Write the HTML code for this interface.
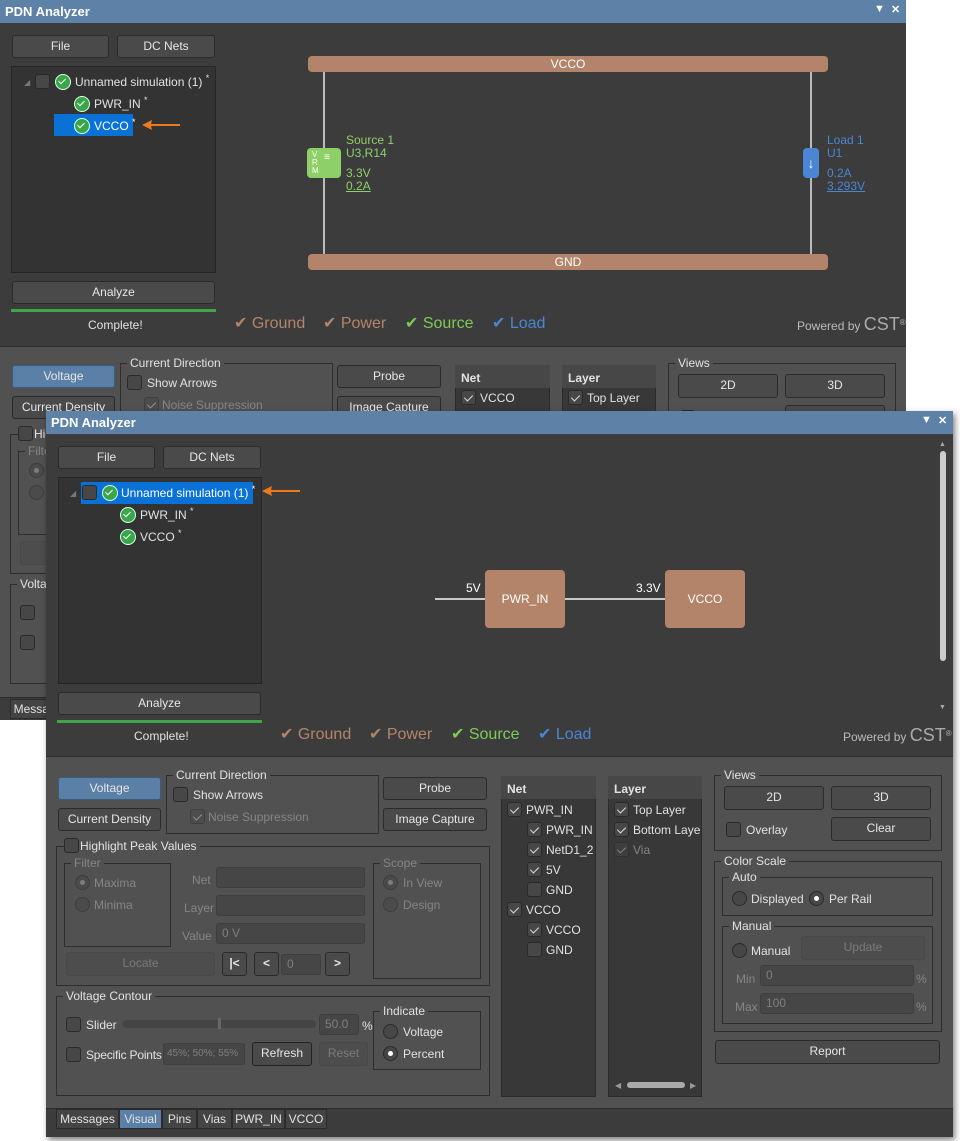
<!DOCTYPE html>
<html><head><meta charset="utf-8"><style>
*{box-sizing:border-box;margin:0;padding:0}
body{width:960px;height:1141px;background:#fff;position:relative;overflow:hidden;font-family:"Liberation Sans",sans-serif;font-size:12px;color:#e2e2e2}
sup{font-size:9px;vertical-align:5px;line-height:0}
.win{position:absolute;width:907px;height:726px;background:#3c3c3c;overflow:hidden}
.a{position:absolute}
.title{left:0;top:0;width:907px;height:23px;background:#5e82a7;color:#fff;font-weight:bold;font-size:13px;padding:4px 5px}
.tb{position:absolute;top:3px;font-size:11px;color:#fff}
.lower{left:0;top:346px;width:907px;height:352px;background:#515151;border-top:1px solid #2e2e2e;border-bottom:1px solid #2a2a2a}
.btn{position:absolute;background:#4a4a4a;border:1px solid #2b2b2b;border-radius:3px;text-align:center;color:#e6e6e6;line-height:21px;white-space:nowrap}
.btn.blue{background:#5b80a8;border-color:#3b5c80}
.btn.dis{color:#7a7a7a;background:#4d4d4d;border-color:#484848}
.grp{position:absolute;border:1px solid #2e2e2e}
.gl{position:absolute;top:-8px;left:6px;background:#515151;padding:0 3px;line-height:14px;white-space:nowrap}
.cb{position:absolute;width:15px;height:15px;border:1px solid #2a2a2a;background:#474747;border-radius:3px}
.cb.k::after{content:"";position:absolute;left:4px;top:2px;width:4px;height:7px;border:solid #ddd;border-width:0 1.5px 1.5px 0;transform:rotate(45deg)}
.cb.d{opacity:.45}
.t{position:absolute;white-space:nowrap;line-height:14px}
.g{color:#858585}
.rd{position:absolute;width:15px;height:15px;border:1px solid #2a2a2a;border-radius:50%;background:#474747}
.rd.on::after{content:"";position:absolute;left:4px;top:4px;width:5px;height:5px;border-radius:50%;background:#fff}
.rd.dis{opacity:.5}
.rd.dis.on::after{background:#aaa}
.inp{position:absolute;background:#464646;border:1px solid #3e3e3e;border-radius:3px;color:#7f7f7f;padding-left:5px;line-height:19px;white-space:nowrap;overflow:hidden}
.list{position:absolute;background:#383838;border:1px solid #2b2b2b}
.lh{position:absolute;background:#474747;font-weight:bold;padding:6px 6px;height:23px}
.tab{position:absolute;top:698px;height:20px;border:1px solid #2b2b2b;background:#444;line-height:18px;text-align:center;font-size:12px;white-space:nowrap}
.tab.on{background:#5b80a8}
.tree{position:absolute;background:#333;border:1px solid #262626}
.ok{position:absolute;width:16px;height:16px;border-radius:50%;background:#3aa64a;border:1.5px solid #dfe;}
.ok::after{content:"";position:absolute;left:4px;top:2px;width:3px;height:6px;border:solid #fff;border-width:0 1.5px 1.5px 0;transform:rotate(45deg)}
.leg{position:absolute;top:313px;font-size:16px;white-space:nowrap}
.pw{position:absolute;left:751px;top:313px;color:#bbb;font-size:12px;white-space:nowrap}
.pw b{font-size:18px;font-weight:normal;color:#aaa}
</style></head><body>

<!-- BACK WINDOW -->
<div class="win" style="left:0;top:0;width:906px;height:720px">
 <div class="a title">PDN Analyzer<span class="tb" style="left:874px">▼</span><span class="tb" style="left:891px">✕</span></div>
 <div class="btn" style="left:12px;top:35px;width:97px;height:23px">File</div>
 <div class="btn" style="left:117px;top:35px;width:98px;height:23px">DC Nets</div>
 <div class="tree" style="left:11px;top:66px;width:205px;height:207px"></div>
 <div class="a" style="left:54px;top:114px;width:79px;height:22px;background:#0a72d6"></div>
 <div class="t" style="left:24px;top:76px;color:#777;font-size:8px">◢</div>
 <div class="cb" style="left:35px;top:74px"></div>
 <div class="ok" style="left:55px;top:74px"></div><div class="t" style="left:75px;top:75px">Unnamed simulation (1) <sup>*</sup></div>
 <div class="ok" style="left:74px;top:96px"></div><div class="t" style="left:94px;top:97px">PWR_IN <sup>*</sup></div>
 <div class="ok" style="left:74px;top:118px"></div><div class="t" style="left:94px;top:119px;color:#fff">VCCO <sup>*</sup></div>
 <svg class="a" style="left:140px;top:119px" width="42" height="12"><path d="M2 6 L12 1 L11 5 L40 5 L40 7 L11 7 L12 11 Z" fill="#f07a1a"/></svg>
 <div class="btn" style="left:12px;top:281px;width:203px;height:23px">Analyze</div>
 <div class="a" style="left:11px;top:309px;width:205px;height:3px;background:#3ea648"></div>
 <div class="t" style="left:88px;top:318px">Complete!</div>
 <div class="a" style="left:308px;top:56px;width:520px;height:16px;background:#b4846a;border-radius:4px;text-align:center;line-height:16px;color:#fff">VCCO</div>
 <div class="a" style="left:308px;top:254px;width:520px;height:16px;background:#b4846a;border-radius:4px;text-align:center;line-height:16px;color:#fff">GND</div>
 <div class="a" style="left:323px;top:72px;width:2px;height:182px;background:#bbb"></div>
 <div class="a" style="left:810px;top:72px;width:2px;height:182px;background:#bbb"></div>
 <div class="a" style="left:307px;top:148px;width:34px;height:30px;background:#8ed068;border-radius:4px;color:#fff;font-size:8px;line-height:8px;padding:3px 0 0 5px">V<br>R<br>M</div>
 <div class="t" style="left:324px;top:155px;color:#fff;font-size:10px;line-height:5px">≡</div>
 <div class="t" style="left:346px;top:134px;color:#8ed068;line-height:13px">Source 1<br>U3,R14</div>
 <div class="t" style="left:346px;top:167px;color:#8ed068;line-height:13px">3.3V<br><u>0.2A</u></div>
 <div class="a" style="left:803px;top:148px;width:16px;height:30px;background:#4a86d4;border-radius:4px;color:#fff;font-size:14px;text-align:center;line-height:30px">↓</div>
 <div class="t" style="left:827px;top:134px;color:#4a86d4;line-height:13px">Load 1<br>U1</div>
 <div class="t" style="left:827px;top:167px;color:#4a86d4;line-height:13px">0.2A<br><u>3.293V</u></div>
 <div class="leg" style="left:234px;color:#b4846a">✔ Ground</div>
 <div class="leg" style="left:323px;color:#b4846a">✔ Power</div>
 <div class="leg" style="left:405px;color:#7ccc55">✔ Source</div>
 <div class="leg" style="left:492px;color:#4a86d4">✔ Load</div>
 <div class="pw" style="top:314px;left:797px">Powered by <b>CST</b><sup style="font-size:8px">®</sup></div>
 <div class="a lower">
  <div class="btn blue" style="left:12px;top:18px;width:103px;height:23px">Voltage</div>
  <div class="btn" style="left:12px;top:49px;width:103px;height:23px">Current Density</div>
  <div class="grp" style="left:120px;top:16px;width:213px;height:59px"><span class="gl">Current Direction</span></div>
  <div class="cb" style="left:127px;top:28px"></div><div class="t" style="left:147px;top:29px">Show Arrows</div>
  <div class="cb k d" style="left:144px;top:50px"></div><div class="t g" style="left:162px;top:51px">Noise Suppression</div>
  <div class="btn" style="left:337px;top:18px;width:104px;height:23px">Probe</div>
  <div class="btn" style="left:337px;top:49px;width:104px;height:23px">Image Capture</div>
  <div class="list" style="left:455px;top:18px;width:95px;height:320px"></div><div class="lh" style="left:455px;top:18px;width:95px">Net</div>
  <div class="cb k" style="left:461px;top:43px"></div><div class="t" style="left:480px;top:44px">VCCO</div>
  <div class="list" style="left:562px;top:18px;width:94px;height:320px"></div><div class="lh" style="left:562px;top:18px;width:94px">Layer</div>
  <div class="cb k" style="left:568px;top:43px"></div><div class="t" style="left:587px;top:44px">Top Layer</div>
  <div class="grp" style="left:668px;top:16px;width:228px;height:76px"><span class="gl">Views</span></div>
  <div class="btn" style="left:678px;top:27px;width:100px;height:24px">2D</div>
  <div class="btn" style="left:785px;top:27px;width:100px;height:24px">3D</div>
  <div class="cb" style="left:680px;top:63px"></div>
  <div class="btn" style="left:785px;top:58px;width:100px;height:24px">Clear</div>
  <div class="grp" style="left:10px;top:87px;width:434px;height:140px"><span class="gl" style="left:20px">Highlight Peak Values</span></div>
  <div class="cb" style="left:18px;top:79px"></div>
  <div class="grp" style="left:18px;top:104px;width:107px;height:84px"><span class="gl g">Filter</span></div>
  <div class="rd on dis" style="left:29px;top:116px"></div><div class="rd dis" style="left:29px;top:138px"></div>
  <div class="btn dis" style="left:20px;top:194px;width:149px;height:24px"></div>
  <div class="grp" style="left:10px;top:237px;width:434px;height:100px"><span class="gl">Voltage Contour</span></div>
  <div class="cb" style="left:20px;top:258px"></div><div class="cb" style="left:20px;top:288px"></div>
  <div class="tab" style="left:10px;top:352px;width:62px">Messages</div>
 </div>
</div>

<!-- FRONT WINDOW -->
<div class="win" style="left:46px;top:411px;box-shadow:2px 3px 6px rgba(0,0,0,.5)">
 <div class="a title">PDN Analyzer<span class="tb" style="left:875px">▼</span><span class="tb" style="left:892px">✕</span></div>
 <div class="btn" style="left:12px;top:35px;width:97px;height:23px">File</div>
 <div class="btn" style="left:117px;top:35px;width:98px;height:23px">DC Nets</div>
 <div class="tree" style="left:12px;top:66px;width:204px;height:207px"></div>
 <div class="a" style="left:35px;top:71px;width:172px;height:22px;background:#0a72d6"></div>
 <div class="t" style="left:24px;top:76px;color:#777;font-size:8px">◢</div>
 <div class="cb" style="left:36px;top:74px"></div>
 <div class="ok" style="left:56px;top:74px"></div><div class="t" style="left:75px;top:75px;color:#fff">Unnamed simulation (1) <sup>*</sup></div>
 <div class="ok" style="left:74px;top:96px"></div><div class="t" style="left:94px;top:97px">PWR_IN <sup>*</sup></div>
 <div class="ok" style="left:74px;top:118px"></div><div class="t" style="left:94px;top:119px">VCCO <sup>*</sup></div>
 <svg class="a" style="left:214px;top:74px" width="42" height="12"><path d="M2 6 L12 1 L11 5 L40 5 L40 7 L11 7 L12 11 Z" fill="#f07a1a"/></svg>
 <div class="btn" style="left:12px;top:281px;width:203px;height:23px">Analyze</div>
 <div class="a" style="left:11px;top:309px;width:205px;height:3px;background:#3ea648"></div>
 <div class="t" style="left:88px;top:318px">Complete!</div>
 <div class="a" style="left:389px;top:187px;width:276px;height:2px;background:#c8c8c8"></div>
 <div class="a" style="left:439px;top:159px;width:80px;height:58px;background:#b4846a;border-radius:4px;text-align:center;line-height:58px;color:#fff">PWR_IN</div>
 <div class="a" style="left:619px;top:159px;width:80px;height:58px;background:#b4846a;border-radius:4px;text-align:center;line-height:58px;color:#fff">VCCO</div>
 <div class="t" style="left:420px;top:170px;color:#fff">5V</div>
 <div class="t" style="left:590px;top:170px;color:#fff">3.3V</div>
 <div class="a" style="left:894px;top:40px;width:6px;height:210px;background:#ccc;border-radius:3px"></div>
 <div class="t" style="left:893px;top:27px;font-size:7px;color:#aaa">▲</div>
 <div class="t" style="left:893px;top:290px;font-size:7px;color:#aaa">▼</div>
 <div class="leg" style="left:234px;color:#b4846a">✔ Ground</div>
 <div class="leg" style="left:323px;color:#b4846a">✔ Power</div>
 <div class="leg" style="left:405px;color:#7ccc55">✔ Source</div>
 <div class="leg" style="left:492px;color:#4a86d4">✔ Load</div>
 <div class="pw" style="top:314px;left:797px">Powered by <b>CST</b><sup style="font-size:8px">®</sup></div>
 <div class="a lower" style="top:345px;height:353px">
  <div class="btn blue" style="left:12px;top:20px;width:103px;height:23px">Voltage</div>
  <div class="btn" style="left:12px;top:51px;width:103px;height:23px">Current Density</div>
  <div class="grp" style="left:120px;top:18px;width:213px;height:59px"><span class="gl">Current Direction</span></div>
  <div class="cb" style="left:127px;top:30px"></div><div class="t" style="left:147px;top:31px">Show Arrows</div>
  <div class="cb k d" style="left:144px;top:52px"></div><div class="t g" style="left:162px;top:53px">Noise Suppression</div>
  <div class="btn" style="left:337px;top:20px;width:104px;height:23px">Probe</div>
  <div class="btn" style="left:337px;top:51px;width:104px;height:23px">Image Capture</div>

  <div class="grp" style="left:10px;top:89px;width:434px;height:140px"><span class="gl" style="left:20px">Highlight Peak Values</span></div>
  <div class="cb" style="left:18px;top:81px"></div>
  <div class="grp" style="left:18px;top:106px;width:107px;height:84px"><span class="gl g">Filter</span></div>
  <div class="rd on dis" style="left:29px;top:118px"></div><div class="t g" style="left:48px;top:119px">Maxima</div>
  <div class="rd dis" style="left:29px;top:140px"></div><div class="t g" style="left:48px;top:141px">Minima</div>
  <div class="t g" style="left:146px;top:116px">Net</div><div class="inp" style="left:170px;top:110px;width:149px;height:21px"></div>
  <div class="t g" style="left:138px;top:144px">Layer</div><div class="inp" style="left:170px;top:138px;width:149px;height:21px"></div>
  <div class="t g" style="left:136px;top:172px">Value</div><div class="inp" style="left:170px;top:166px;width:149px;height:21px">0 V</div>
  <div class="grp" style="left:327px;top:106px;width:108px;height:116px"><span class="gl g">Scope</span></div>
  <div class="rd on dis" style="left:337px;top:118px"></div><div class="t g" style="left:357px;top:119px">In View</div>
  <div class="rd dis" style="left:337px;top:140px"></div><div class="t g" style="left:357px;top:141px">Design</div>
  <div class="btn dis" style="left:20px;top:195px;width:149px;height:24px">Locate</div>
  <div class="btn" style="left:176px;top:195px;width:25px;height:24px;font-weight:bold">|&lt;</div>
  <div class="btn" style="left:208px;top:195px;width:25px;height:24px;font-weight:bold">&lt;</div>
  <div class="inp" style="left:235px;top:197px;width:40px;height:21px">0</div>
  <div class="btn" style="left:279px;top:195px;width:25px;height:24px;font-weight:bold">&gt;</div>

  <div class="grp" style="left:10px;top:239px;width:434px;height:100px"><span class="gl">Voltage Contour</span></div>
  <div class="cb" style="left:20px;top:260px"></div><div class="t" style="left:40px;top:261px">Slider</div>
  <div class="a" style="left:76px;top:263px;width:194px;height:8px;background:#454545;border-radius:4px"></div>
  <div class="a" style="left:172px;top:261px;width:3px;height:11px;background:#666"></div>
  <div class="inp" style="left:273px;top:257px;width:40px;height:21px">50.0</div><div class="t" style="left:316px;top:262px">%</div>
  <div class="cb" style="left:20px;top:290px"></div><div class="t" style="left:40px;top:291px;letter-spacing:-0.2px">Specific Points</div>
  <div class="inp" style="left:117px;top:286px;width:82px;height:22px;font-size:10px;padding-left:3px">45%; 50%; 55%</div>
  <div class="btn" style="left:206px;top:285px;width:60px;height:24px;border-color:#222">Refresh</div>
  <div class="btn dis" style="left:273px;top:285px;width:49px;height:24px">Reset</div>
  <div class="grp" style="left:327px;top:254px;width:108px;height:59px"><span class="gl">Indicate</span></div>
  <div class="rd" style="left:337px;top:267px"></div><div class="t" style="left:357px;top:268px">Voltage</div>
  <div class="rd on" style="left:337px;top:289px"></div><div class="t" style="left:357px;top:290px">Percent</div>

  <div class="list" style="left:455px;top:19px;width:95px;height:321px"></div><div class="lh" style="left:455px;top:19px;width:95px">Net</div>
  <div class="cb k" style="left:461px;top:45px"></div><div class="t" style="left:480px;top:46px">PWR_IN</div>
  <div class="cb k" style="left:481px;top:65px"></div><div class="t" style="left:500px;top:66px">PWR_IN</div>
  <div class="cb k" style="left:481px;top:85px"></div><div class="t" style="left:500px;top:86px">NetD1_2</div>
  <div class="cb k" style="left:481px;top:105px"></div><div class="t" style="left:500px;top:106px">5V</div>
  <div class="cb" style="left:481px;top:125px"></div><div class="t" style="left:500px;top:126px">GND</div>
  <div class="cb k" style="left:461px;top:145px"></div><div class="t" style="left:480px;top:146px">VCCO</div>
  <div class="cb k" style="left:481px;top:165px"></div><div class="t" style="left:500px;top:166px">VCCO</div>
  <div class="cb" style="left:481px;top:185px"></div><div class="t" style="left:500px;top:186px">GND</div>

  <div class="list" style="left:562px;top:19px;width:94px;height:321px;overflow:hidden"></div><div class="lh" style="left:562px;top:19px;width:94px">Layer</div>
  <div class="cb k" style="left:568px;top:45px"></div><div class="t" style="left:587px;top:46px">Top Layer</div>
  <div class="cb k" style="left:568px;top:65px"></div><div class="t" style="left:587px;top:66px;width:68px;overflow:hidden">Bottom Layer</div>
  <div class="cb k d" style="left:568px;top:85px"></div><div class="t g" style="left:587px;top:86px">Via</div>
  <div class="a" style="left:581px;top:325px;width:58px;height:6px;background:#aaa;border-radius:3px"></div>
  <div class="t" style="left:569px;top:322px;font-size:8px;color:#999">◀</div><div class="t" style="left:644px;top:322px;font-size:8px;color:#999">▶</div>

  <div class="grp" style="left:668px;top:18px;width:228px;height:76px"><span class="gl">Views</span></div>
  <div class="btn" style="left:678px;top:29px;width:100px;height:24px">2D</div>
  <div class="btn" style="left:785px;top:29px;width:100px;height:24px">3D</div>
  <div class="cb" style="left:680px;top:65px"></div><div class="t" style="left:700px;top:66px">Overlay</div>
  <div class="btn" style="left:785px;top:60px;width:100px;height:24px">Clear</div>
  <div class="grp" style="left:668px;top:104px;width:228px;height:171px"><span class="gl">Color Scale</span></div>
  <div class="grp" style="left:676px;top:120px;width:211px;height:39px"><span class="gl">Auto</span></div>
  <div class="rd" style="left:686px;top:134px"></div><div class="t" style="left:705px;top:135px">Displayed</div>
  <div class="rd on" style="left:763px;top:134px"></div><div class="t" style="left:783px;top:135px">Per Rail</div>
  <div class="grp" style="left:676px;top:169px;width:211px;height:98px"><span class="gl">Manual</span></div>
  <div class="rd" style="left:686px;top:186px"></div><div class="t" style="left:705px;top:187px">Manual</div>
  <div class="btn dis" style="left:755px;top:179px;width:124px;height:24px">Update</div>
  <div class="t g" style="left:690px;top:215px">Min</div><div class="inp" style="left:714px;top:208px;width:154px;height:21px">0</div><div class="t g" style="left:870px;top:215px">%</div>
  <div class="t g" style="left:689px;top:243px">Max</div><div class="inp" style="left:714px;top:236px;width:154px;height:21px">100</div><div class="t g" style="left:870px;top:243px">%</div>
  <div class="btn" style="left:669px;top:283px;width:225px;height:24px">Report</div>
 </div>
 <div class="tab" style="left:10px;width:63px">Messages</div>
 <div class="tab on" style="left:73px;width:43px">Visual</div>
 <div class="tab" style="left:116px;width:35px">Pins</div>
 <div class="tab" style="left:151px;width:35px">Vias</div>
 <div class="tab" style="left:186px;width:53px">PWR_IN</div>
 <div class="tab" style="left:239px;width:42px">VCCO</div>
</div>
</body></html>
